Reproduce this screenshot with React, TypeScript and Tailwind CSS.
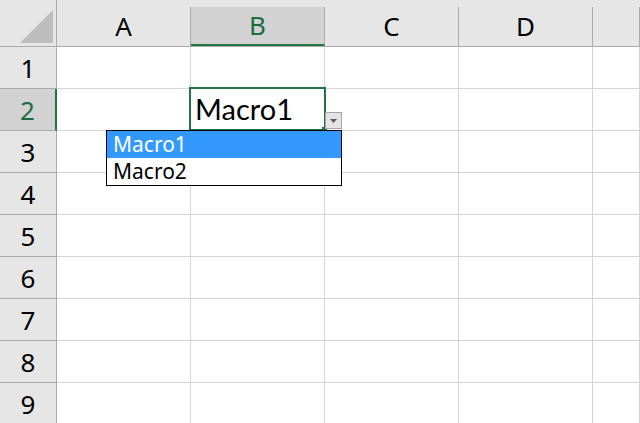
import React from "react";

const columns = ["A", "B", "C", "D", ""];
const rows = [1, 2, 3, 4, 5, 6, 7, 8, 9];

function Corner() {
  return (
    <div className="bg-[#e6e6e6] border-r border-b border-[#ababab] flex items-end justify-end pr-[3px] pb-[3px]">
      <svg width="33" height="33" viewBox="0 0 33 33">
        <polygon points="33,0 33,33 0,33" fill="#bdbdbd" />
      </svg>
    </div>
  );
}

function ColHeader({ label }: { label: string }) {
  const active = label === "B";
  return (
    <div className="bg-[#e6e6e6] border-b border-[#ababab] pt-[7px]">
      <div
        className={
          active
            ? "h-full bg-[#d2d2d2] border-r border-[#ababab] border-b-2 border-b-[#217346] flex items-center justify-center text-[26px] text-[#1d6b40]"
            : "h-full border-r border-[#ababab] flex items-center justify-center text-[26px] text-black"
        }
      >
        {label}
      </div>
    </div>
  );
}

function RowHeader({ n }: { n: number }) {
  const active = n === 2;
  return (
    <div
      className={
        active
          ? "bg-[#d2d2d2] border-r-2 border-r-[#217346] border-b border-b-[#ababab] flex items-center justify-center text-[26px] text-[#1d6b40] pt-[2px]"
          : "bg-[#e6e6e6] border-r border-b border-[#ababab] flex items-center justify-center text-[26px] text-black pt-[2px]"
      }
    >
      {n}
    </div>
  );
}

export default function App() {
  return (
    <div
      className="relative w-[640px] h-[423px] overflow-hidden bg-white"
      style={{ fontFamily: '"Noto Sans", "Open Sans", sans-serif' }}
    >
      <div className="grid grid-cols-[57px_134px_134px_134px_134px_1fr] grid-rows-[47px_repeat(9,42px)]">
        <Corner />
        {columns.map((c, i) => (
          <ColHeader key={i} label={c} />
        ))}
        {rows.map((r) => (
          <React.Fragment key={r}>
            <RowHeader n={r} />
            {columns.map((c, i) => (
              <div key={i} className="border-r border-b border-[#d4d4d4] flex items-end">
                {r === 2 && c === "B" ? (
                  <span
                    className="pl-[4px] pb-[7px] text-[29px] leading-none text-black"
                    style={{ fontFamily: 'Lato, "Open Sans", sans-serif' }}
                  >
                    Macro1
                  </span>
                ) : null}
              </div>
            ))}
          </React.Fragment>
        ))}
      </div>

      {/* active cell outline */}
      <div className="absolute left-[189px] top-[87px] w-[137px] h-[44px] border-2 border-[#217346]" />
      <div className="absolute left-[322px] top-[127px] w-[5px] h-[5px] bg-[#217346]" />

      {/* validation dropdown button */}
      <div className="absolute left-[325px] top-[112px] w-[17px] h-[17px] bg-[#e4e4e4] border border-[#a6a6a6] flex items-center justify-center">
        <svg width="7" height="4" viewBox="0 0 7 4">
          <polygon points="0,0 7,0 3.5,4" fill="#5a5a5a" />
        </svg>
      </div>

      {/* dropdown list */}
      <div className="absolute left-[106px] top-[130px] w-[236px] h-[56px] bg-white border border-black">
        <div className="h-[27px] bg-[#3399ff] text-white text-[21px] leading-[27px] pl-[6px]">
          Macro1
        </div>
        <div className="h-[27px] text-black text-[21px] leading-[27px] pl-[6px]">
          Macro2
        </div>
      </div>
    </div>
  );
}
